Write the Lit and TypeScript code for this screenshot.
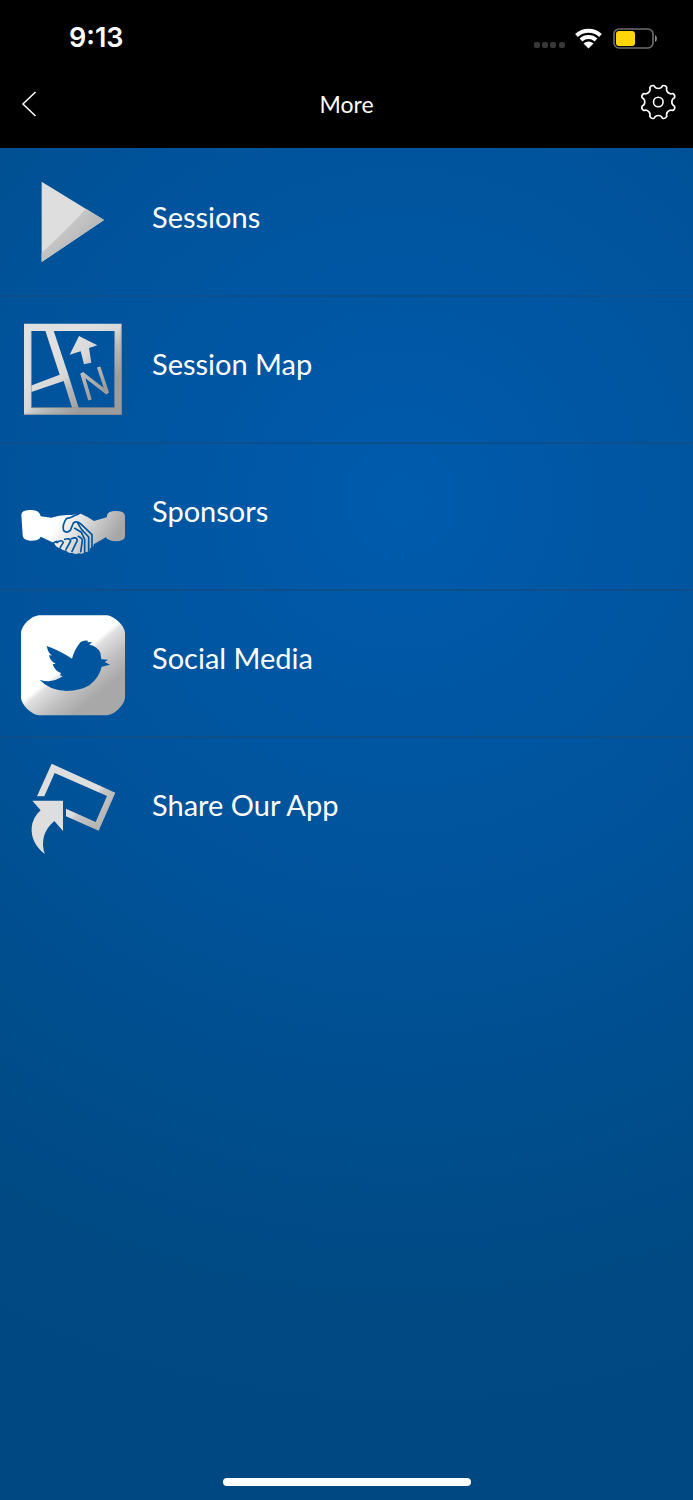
import { LitElement, html, svg, css } from "lit";
import { customElement, property } from "lit/decorators.js";

/** Outline of a cog: short rounded teeth joined by scalloped notches. */
function cogPath(cx: number, cy: number, r: number, teeth: number, half: number, notch: number): string {
  const at = (deg: number) => {
    const a = (deg * Math.PI) / 180;
    return `${(cx + r * Math.cos(a)).toFixed(2)} ${(cy + r * Math.sin(a)).toFixed(2)}`;
  };
  const step = 360 / teeth;
  let d = `M${at(step / 2 - half)}`;
  for (let i = 0; i < teeth; i++) {
    const a = step / 2 + i * step;
    d += `A3.6 3.6 0 0 1 ${at(a + half)}A${notch} ${notch} 0 0 0 ${at(a + step - half)}`;
  }
  return d + "Z";
}

const icons: Record<string, unknown> = {
  play: svg`
    <defs>
      <linearGradient id="g" gradientUnits="userSpaceOnUse" x1="160" y1="203" x2="215" y2="258">
        <stop offset="0" stop-color="#dedede" /><stop offset="0.01" stop-color="#c6c6c6" />
        <stop offset="1" stop-color="#b4b4b4" />
      </linearGradient>
    </defs>
    <path fill="#dedede" d="M95 56 282 171 95 297Z" />
    <path fill="url(#g)" d="M228 137 282 171 95 297V270Q165 205 228 137Z" />`,
  map: svg`
    <defs>
      <linearGradient id="g" gradientUnits="userSpaceOnUse" x1="135" y1="125" x2="255" y2="262">
        <stop offset="0" stop-color="#e0e0e0" /><stop offset="0.4" stop-color="#d8d8d8" />
        <stop offset="0.62" stop-color="#b8b8b8" /><stop offset="1" stop-color="#9c9c9c" />
      </linearGradient>
    </defs>
    <path fill="url(#g)" fill-rule="evenodd" d="M42 41H335V314H42ZM64 63V293H314V63Z" />
    <path fill="url(#g)" d="M106 62H131L175 194 207 296H187L161 213 62 247V227L149 194Z" />
    <path fill="url(#g)" d="M207 78 262 106 237 114 244 158 222 163 212 124 179 134Z" />
    <path fill="none" stroke="url(#g)" stroke-width="11" stroke-linejoin="bevel" d="M240 270 216 190 292 249 266 171" />
    <path fill="none" stroke="#8f8f8f" stroke-width="2" d="M43 313H334V43M64 63V293H314V63" />`,
  hands: svg`
    <defs>
      <linearGradient id="g" gradientUnits="userSpaceOnUse" x1="150" y1="180" x2="300" y2="270">
        <stop offset="0" stop-color="#fff" /><stop offset="0.35" stop-color="#e2e2e2" />
        <stop offset="0.75" stop-color="#bcbcbc" /><stop offset="1" stop-color="#a6a6a6" />
      </linearGradient>
    </defs>
    <path fill="url(#g)" d="M34 173Q35 160 58 159 88 156 92 178L124 182Q150 172 184 174L189 173 212 170Q232 178 252 192L290 181Q291 160 318 162 345 162 345 178V240Q342 252 318 253 294 252 288 241L251 262Q252 272 240 274 240 285 224 286 218 293 206 289 198 294 186 287 174 290 168 280 156 282 152 274 138 272 132 258L92 239Q88 252 60 251 37 248 38 234Z" />
    <path fill="none" stroke="#00559f" stroke-width="5" stroke-linecap="round" stroke-linejoin="round"
      d="M206 171 191 177Q184 182 169 185 156 203 161 221 170 230 181 220L190 198Q202 190 214 202L246 233V274M202 196 215 218 236 240V280M194 214 214 226 224 247V286M205 238Q218 244 217 252L212 284M184 245Q200 238 202 250L186 283M164 247Q179 242 182 252L168 277M141 257Q154 246 160 256L151 271M130 258 140 253" />`,
  bird: svg`
    <defs>
      <linearGradient id="g" gradientUnits="userSpaceOnUse" x1="177" y1="176" x2="260" y2="276">
        <stop offset="0" stop-color="#fff" /><stop offset="0.12" stop-color="#e0e0e0" />
        <stop offset="0.55" stop-color="#c0c0c0" /><stop offset="1" stop-color="#a8a8a8" />
      </linearGradient>
    </defs>
    <path fill="url(#g)" d="M86 34H292Q309 37 327 54 344 71 345 86V282Q342 299 325 316 308 332 292 334H86Q69 331 51 314 35 298 33 282V86Q35 69 52 52 69 36 86 34Z" />
    <path fill="#00559f" d="M110 126Q146 138 186 164 192 138 212 114 220 108 234 110L232 115 246 114 238 122Q262 126 271 146L274 166 294 167 284 174 300 182 275 188Q268 220 238 244 212 260 170 261 116 258 89 227 124 240 158 217L150 214 153 207Q135 202 128 181L137 179Q120 172 117 153L126 155Q114 147 110 126Z" />`,
  share: svg`
    <defs>
      <linearGradient id="g" gradientUnits="userSpaceOnUse" x1="170" y1="110" x2="275" y2="215">
        <stop offset="0" stop-color="#dedede" /><stop offset="0.48" stop-color="#dedede" />
        <stop offset="0.56" stop-color="#c6c6c6" /><stop offset="1" stop-color="#b4b4b4" />
      </linearGradient>
    </defs>
    <path fill="url(#g)" d="M81 136 125 38 316 125 266 239 168 196V173L257 213 291 135 134 66 103 136Z" />
    <path fill="#dedede" d="M67 149H159V240L133 210Q86 250 104 309 62 275 65 230 68 199 92 178Z" />`,
};

const entries = [
  { icon: "play", label: "Sessions" },
  { icon: "map", label: "Session Map" },
  { icon: "hands", label: "Sponsors" },
  { icon: "bird", label: "Social Media" },
  { icon: "share", label: "Share Our App" },
];

@customElement("menu-icon")
export class MenuIcon extends LitElement {
  static styles = css`
    :host { display: block; flex: none; }
    .art { display: block; width: 130px; height: 120px; }
  `;
  @property() name = "";
  render() {
    return html`<svg class="art" viewBox="0 0 390 360" aria-hidden="true">${icons[this.name]}</svg>`;
  }
}

@customElement("app-root")
export class AppRoot extends LitElement {
  static styles = css`
    :host {
      display: flex;
      flex-direction: column;
      min-height: 100vh;
      color: #fff;
      font-family: Lato, "Open Sans", sans-serif;
      background: radial-gradient(circle at 58% 500px, #005bad 0, #0056a2 230px, #00539b 400px, #004e8e 600px, #004983 820px, #004881 1000px);
    }
    .top { background: #000; height: 148px; }
    .status {
      display: flex;
      align-items: center;
      justify-content: space-between;
      height: 76px;
      padding: 0 36px 0 69px;
    }
    .time { font: 600 27px/32px Inter, sans-serif; }
    .signals { display: block; width: 124px; height: 28px; }
    .bar {
      display: grid;
      grid-template-columns: 1fr auto 1fr;
      align-items: center;
      height: 56px;
      padding: 0 16px;
    }
    .title { margin: 0; font-size: 23px; line-height: 32px; font-weight: 400; }
    .tool {
      appearance: none;
      border: 0;
      padding: 0;
      background: none;
      color: inherit;
      cursor: pointer;
    }
    .tool.end { justify-self: end; }
    .tool.start { justify-self: start; }
    .glyph { display: block; width: 36px; height: 36px; overflow: visible; fill: none; stroke: #fff; }
    .list { flex: 1; margin: 0; padding: 0; list-style: none; }
    .row {
      display: flex;
      align-items: center;
      box-sizing: border-box;
      height: 147px;
      padding: 3px 24px 0 10px;
      gap: 12px;
      color: inherit;
      text-decoration: none;
    }
    .item + .item .row { border-top: 2px solid #0e4f8a; padding-top: 1px; }
    .label { font-size: 29px; line-height: 40px; padding-bottom: 12px; }
    .home { display: flex; justify-content: center; padding-bottom: 14px; }
    .handle { width: 248px; height: 8px; border-radius: 4px; background: #fff; }
  `;

  render() {
    return html`
      <header class="top">
        <div class="status">
          <span class="time">9:13</span>
          <svg class="signals" viewBox="0 0 124 28" aria-hidden="true">
            ${[1, 9, 17, 26].map((x) => svg`<rect x=${x} y="18" width="6" height="6" rx="2" fill="#383838" />`)}
            <g fill="none" stroke="#fff" stroke-width="4">
              <path d="M43.500 11.500A17.500 17.500 0 0 1 67.500 11.500" />
              <path d="M48 16A11 11 0 0 1 63 16" />
            </g>
            <path fill="#fff" d="M50.500 19.500Q55.500 15.500 60.500 19.500L55.500 24.500Z" />
            <rect x="81" y="5" width="39" height="19" rx="5" fill="none" stroke="#6e6e6e" stroke-width="1.600" />
            <rect x="83" y="7" width="19" height="15" rx="3" fill="#ffd60a" />
            <path fill="#8a8a8a" d="M122 11Q124 12 124 14.500 124 17 122 18Z" />
          </svg>
        </div>
        <nav class="bar">
          <button class="tool start" aria-label="Back">
            <svg class="glyph" viewBox="0 0 36 36"><path stroke-width="1.500" d="M19.500 6 7 18 19.500 30" /></svg>
          </button>
          <h1 class="title">More</h1>
          <button class="tool end" aria-label="Settings">
            <svg class="glyph" viewBox="0 0 36 36">
              <path stroke-width="1.600" stroke-linejoin="round" d=${cogPath(17.3, 16, 16.8, 8, 8, 4.6)} />
              <circle cx="17.300" cy="16" r="4.800" stroke-width="1.600" />
            </svg>
          </button>
        </nav>
      </header>
      <ul class="list">
        ${entries.map(
          (e) => html`<li class="item">
            <a class="row" href="#"><menu-icon name=${e.icon}></menu-icon><span class="label">${e.label}</span></a>
          </li>`,
        )}
      </ul>
      <div class="home"><div class="handle"></div></div>
    `;
  }
}
